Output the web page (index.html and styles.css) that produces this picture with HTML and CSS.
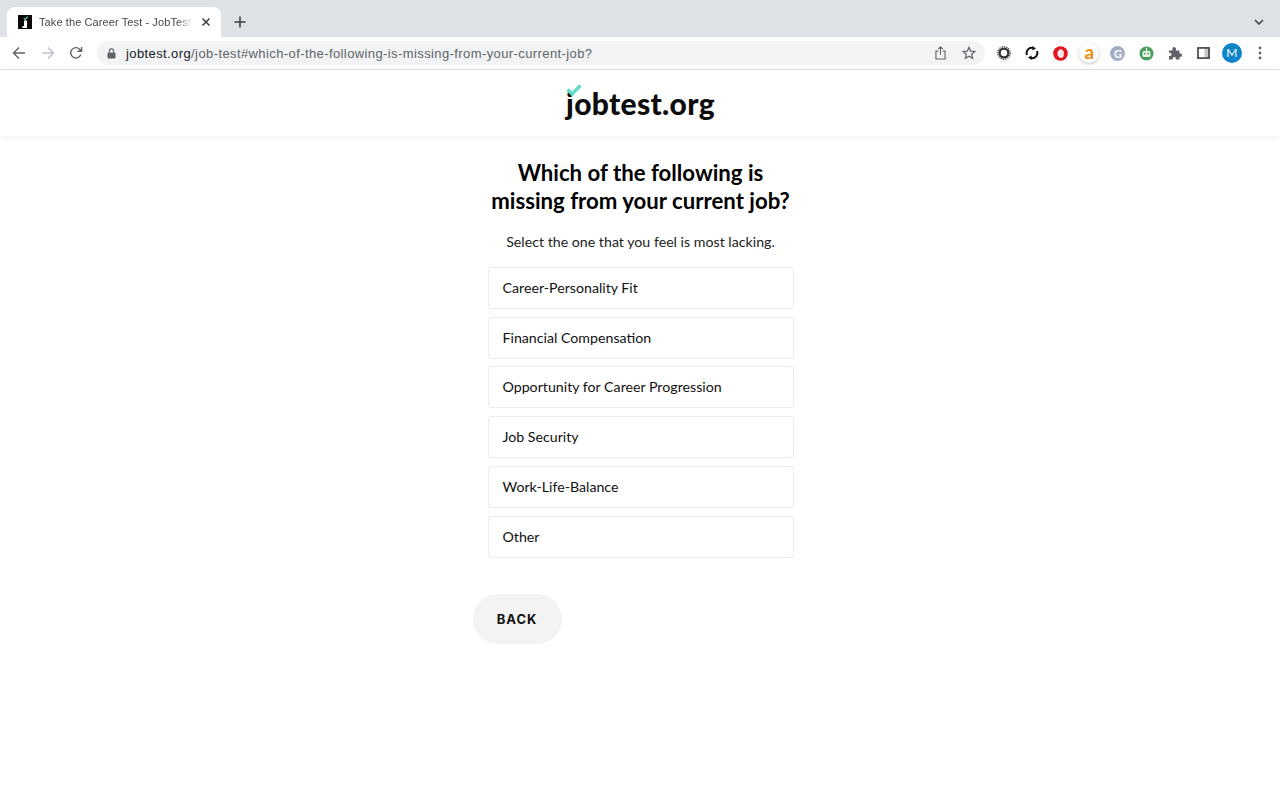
FILE: index.html
```html
<!DOCTYPE html>
<html lang="en">
<head>
    <meta charset="UTF-8">
    <meta name="viewport" content="width=device-width, initial-scale=1.0">
    <title>Take the Career Test - JobTest.org</title>
    <link rel="stylesheet" href="styles.css">
</head>
<body>
    <!-- browser tab strip -->
    <div class="tabstrip">
        <div class="tab">
            <svg class="favicon" width="14" height="14" viewBox="0 0 14 14">
                <rect width="14" height="14" fill="#0b0b0b"/>
                <rect x="6" y="5.5" width="3" height="6" fill="#fff"/>
                <rect x="4.5" y="11" width="4.5" height="2" fill="#fff"/>
                <path d="M5.8 3.4L7.2 4.4L9.6 1.6" stroke="#6fd6c0" stroke-width="1.1" fill="none"/>
            </svg>
            <span class="tab-title">Take the Career Test - JobTest.</span>
            <svg class="tab-close" width="10" height="10" viewBox="0 0 10 10">
                <path d="M1.5 1.5L8.5 8.5M8.5 1.5L1.5 8.5" stroke="#3c4043" stroke-width="1.5"/>
            </svg>
        </div>
        <svg class="new-tab" width="12" height="12" viewBox="0 0 12 12">
            <path d="M6 0.5V11.5M0.5 6H11.5" stroke="#3c4043" stroke-width="1.6"/>
        </svg>
        <svg class="tab-menu" width="10" height="6" viewBox="0 0 10 6">
            <path d="M1 1L5 5L9 1" stroke="#3c4043" stroke-width="1.5" fill="none"/>
        </svg>
    </div>

    <!-- address bar -->
    <div class="toolbar">
        <div class="nav-buttons">
            <svg width="14" height="14" viewBox="0 0 14 14"><path d="M13 7H2M7 1.5L1.5 7L7 12.5" stroke="#5f6368" stroke-width="1.4" fill="none"/></svg>
            <svg width="14" height="14" viewBox="0 0 14 14"><path d="M1 7H12M7 1.5L12.5 7L7 12.5" stroke="#bdc1c6" stroke-width="1.4" fill="none"/></svg>
            <svg width="14" height="14" viewBox="0 0 14 14"><path d="M11.8 8.6A5.2 5.2 0 1 1 10.7 3.3L12.4 5M12.6 1V5.2H8.4" stroke="#5f6368" stroke-width="1.4" fill="none"/></svg>
        </div>
        <div class="omnibox">
            <svg class="lock" width="9" height="11" viewBox="0 0 9 11">
                <rect x="0.5" y="4.5" width="8" height="6" rx="1" fill="#5f6368"/>
                <path d="M2.4 4.5V3A2.1 2.1 0 0 1 6.6 3V4.5" stroke="#5f6368" stroke-width="1.1" fill="none"/>
            </svg>
            <span class="url"><span class="url-host">jobtest.org</span>/job-test#which-of-the-following-is-missing-from-your-current-job?</span>
            <svg class="share" width="11" height="14" viewBox="0 0 12 15">
                <path d="M3.5 5.5H1V14H11V5.5H8.5M6 9.5V1M3.5 3.2L6 0.8L8.5 3.2" stroke="#5f6368" stroke-width="1.2" fill="none"/>
            </svg>
            <svg class="star" width="14" height="14" viewBox="0 0 14 14">
                <path d="M7 1.3L8.7 5.1L12.8 5.5L9.7 8.2L10.6 12.3L7 10.2L3.4 12.3L4.3 8.2L1.2 5.5L5.3 5.1Z" stroke="#5f6368" stroke-width="1.2" fill="none"/>
            </svg>
        </div>
        <div class="extensions">
            <svg width="14" height="14" viewBox="0 0 14 14"><circle cx="7" cy="7" r="4.4" fill="none" stroke="#333" stroke-width="2.4"/><circle cx="7" cy="7" r="6.3" fill="none" stroke="#333" stroke-width="1.2" stroke-dasharray="1.2 1.2"/></svg>
            <svg width="14" height="14" viewBox="0 0 14 14"><path d="M2 9A5.2 5.2 0 0 1 8 2M12 5A5.2 5.2 0 0 1 6 12" stroke="#111" stroke-width="2" fill="none"/><path d="M7.4 0L11 2.4L7.4 4.6ZM6.6 9.4L3 11.6L6.6 14Z" fill="#111"/></svg>
            <svg width="15" height="15" viewBox="0 0 15 15"><circle cx="7.5" cy="7.5" r="7.3" fill="#e2141c"/><path d="M4.4 7.4L4.8 4.8H6V3.6H7.2V3.2H8.6V3.8H9.8V5H10.8V9C10.8 10.8 9.6 12 8 12C6.4 12 5.6 11 4.4 9Z" fill="#f7e9e9"/></svg>
            <span class="ext-amazon">a</span>
            <span class="ext-g">G</span>
            <svg width="15" height="15" viewBox="0 0 15 15"><circle cx="7.5" cy="7.5" r="7" fill="#4a9e5c"/><rect x="3.5" y="5" width="8" height="6" rx="1.5" fill="#e8f3ea"/><circle cx="5.8" cy="7.6" r="0.9" fill="#4a9e5c"/><circle cx="9.2" cy="7.6" r="0.9" fill="#4a9e5c"/><rect x="6.9" y="2" width="1.2" height="3" fill="#e8f3ea"/></svg>
            <svg width="14" height="14" viewBox="0 0 14 14"><path d="M1 4.5H4.4C4 2.4 5 1 6.2 1C7.4 1 8.4 2.4 8 4.5H11.5V7.6C13.4 7.2 14 8.2 14 9.2C14 10.2 13.4 11.2 11.5 10.8V13.5H7.8C8.1 11.8 7.4 11 6.3 11C5.2 11 4.5 11.8 4.8 13.5H1V10C2.6 10.3 3.4 9.5 3.4 8.4C3.4 7.3 2.6 6.6 1 6.9Z" fill="#5f6368"/></svg>
            <svg width="13" height="12" viewBox="0 0 14 13"><rect x="8" y="1" width="5" height="11" fill="#c9c9c9"/><rect x="1" y="1" width="12" height="11" fill="none" stroke="#444" stroke-width="1.8"/></svg>
            <span class="avatar">M</span>
            <svg width="4" height="14" viewBox="0 0 4 14"><circle cx="2" cy="2" r="1.4" fill="#5f6368"/><circle cx="2" cy="7" r="1.4" fill="#5f6368"/><circle cx="2" cy="12" r="1.4" fill="#5f6368"/></svg>
        </div>
    </div>

    <!-- site header -->
    <div class="header">
        <div class="logo">
            <svg class="logo-check" width="16" height="12" viewBox="0 0 16 12">
                <path d="M1.5 5.5L6 10L14.5 1.5" stroke="#5fdcc4" stroke-width="3.4" fill="none"/>
            </svg>
            <span>jobtest.org</span>
        </div>
    </div>

    <div class="container">
        <h1>Which of the following is<br>missing from your current job?</h1>
        <p class="hint">Select the one that you feel is most lacking.</p>
        <div class="options">
            <div class="option">Career-Personality Fit</div>
            <div class="option">Financial Compensation</div>
            <div class="option">Opportunity for Career Progression</div>
            <div class="option">Job Security</div>
            <div class="option">Work-Life-Balance</div>
            <div class="option">Other</div>
        </div>
        <div class="actions">
            <div class="back">BACK</div>
        </div>
    </div>
</body>
</html>
```

FILE: styles.css
```css
body {
    font-family: "Lato", Arial, sans-serif;
    background-color: #fff;
    margin: 0;
    padding: 0;
    height: 800px;
    overflow: hidden;
}
.tabstrip {
    height: 37px;
    background-color: #dee1e6;
    display: flex;
    align-items: flex-end;
    padding-left: 7px;
    position: relative;
}
.tab {
    width: 214px;
    height: 30px;
    box-sizing: border-box;
    background-color: #fff;
    border-radius: 8px 8px 0 0;
    display: flex;
    align-items: center;
    padding: 0 10px 0 11px;
}
.favicon {
    flex: none;
    margin-right: 7px;
}
.tab-title {
    flex: 1;
    min-width: 0;
    font-family: "Liberation Sans", Arial, sans-serif;
    font-size: 11px;
    letter-spacing: 0.1px;
    color: #45484c;
    white-space: nowrap;
    -webkit-mask-image: linear-gradient(to right, #000 88%, transparent 97%);
    mask-image: linear-gradient(to right, #000 88%, transparent 97%);
}
.tab-close {
    flex: none;
    margin-left: 4px;
}
.new-tab {
    margin: 0 0 9px 13px;
}
.tab-menu {
    margin: 0 16px 12px auto;
}
.toolbar {
    height: 32px;
    background-color: #fff;
    border-bottom: 1px solid #e3e4e7;
    display: flex;
    align-items: center;
}
.nav-buttons {
    display: flex;
    align-items: center;
    gap: 14.5px;
    padding-left: 12px;
    width: 86px;
    box-sizing: border-box;
}
.omnibox {
    width: 888px;
    height: 24px;
    margin-left: 11px;
    background-color: #f1f3f4;
    border-radius: 12px;
    display: flex;
    align-items: center;
    padding: 0 9px 0 10px;
    box-sizing: border-box;
}
.lock {
    flex: none;
    margin-right: 10px;
}
.url {
    flex: 1;
    font-family: "Liberation Sans", Arial, sans-serif;
    font-size: 13px;
    letter-spacing: 0.4px;
    color: #5f6368;
    white-space: nowrap;
}
.url-host {
    color: #202124;
}
.share {
    margin-right: 16px;
}
.extensions {
    display: grid;
    grid-template-columns: repeat(10, 28.5px);
    justify-items: center;
    align-items: center;
    margin-left: 4.7px;
}
.ext-amazon {
    width: 20px;
    height: 20px;
    border-radius: 50%;
    background-color: #fff;
    box-shadow: 0 1px 3px rgba(0, 0, 0, 0.25);
    color: #f08a12;
    font-size: 19px;
    font-weight: 700;
    line-height: 18px;
    text-align: center;
}
.ext-g {
    width: 15px;
    height: 15px;
    border-radius: 50%;
    background-color: #a3aec8;
    color: #fff;
    font-size: 11px;
    font-weight: 700;
    line-height: 15px;
    text-align: center;
}
.avatar {
    width: 20px;
    height: 20px;
    border-radius: 50%;
    background-color: #0b84c9;
    color: #fff;
    font-size: 12px;
    line-height: 20px;
    text-align: center;
}
.header {
    height: 66px;
    background-color: #fff;
    box-shadow: 0 1px 6px rgba(0, 0, 0, 0.08);
    display: flex;
    align-items: center;
    justify-content: center;
}
.logo {
    position: relative;
    font-size: 30px;
    font-weight: 900;
    color: #0c0c0c;
    line-height: 1;
    letter-spacing: 0.3px;
    padding-left: 1px;
}
.logo-check {
    position: absolute;
    left: 1px;
    top: -4px;
}
.container {
    width: 306px;
    margin: 0 auto;
    position: relative;
    left: 0.5px;
    text-align: center;
}
h1 {
    margin: 22.5px -20px 0 -20px;
    font-size: 22.2px;
    font-weight: 700;
    line-height: 28.5px;
    color: #000;
}
.hint {
    margin: 16px -20px 15.3px -20px;
    font-size: 14.2px;
    line-height: 20px;
    color: #222;
}
.options {
    display: flex;
    flex-direction: column;
    gap: 7.8px;
}
.option {
    height: 42px;
    box-sizing: border-box;
    border: 1px solid #ececec;
    border-radius: 3px;
    padding: 0 14px;
    font-size: 14.2px;
    line-height: 40px;
    color: #111;
    text-align: left;
}
.actions {
    margin: 36px 0 0 -15px;
    display: flex;
}
.back {
    width: 89px;
    height: 50px;
    border-radius: 25px;
    background-color: #f3f3f3;
    font-family: "Inter", Arial, sans-serif;
    font-size: 13px;
    font-weight: 700;
    letter-spacing: 0.9px;
    line-height: 50px;
    color: #111;
    text-align: center;
}
```
